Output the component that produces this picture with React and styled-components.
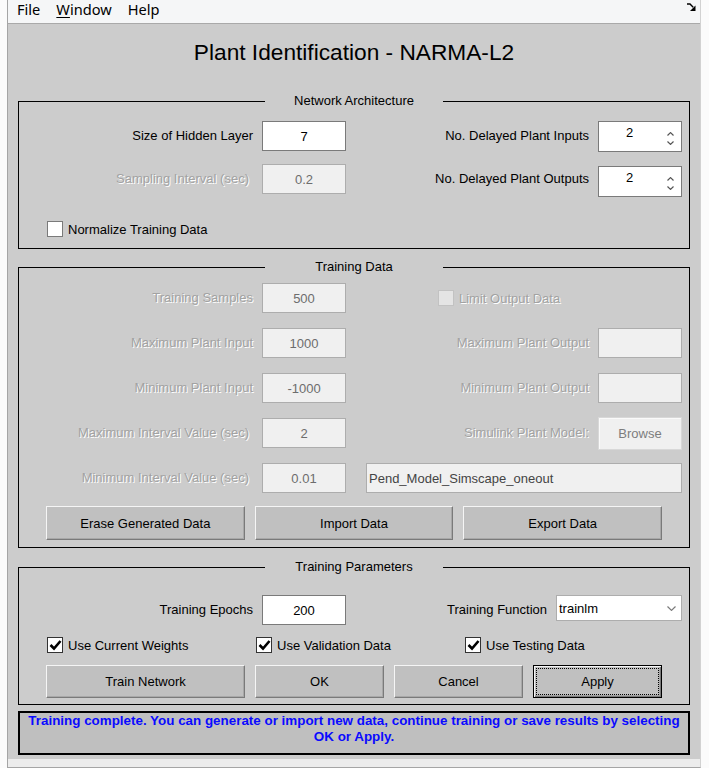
import React from "react";
import styled, { createGlobalStyle, css } from "styled-components";

const GlobalStyle = createGlobalStyle`
  html, body { margin: 0; padding: 0; background: #fbfbfb; }
  body { font-family: "Liberation Sans", Arial, sans-serif; }
  *, *::before, *::after { box-sizing: border-box; }
`;

const Frame = styled.div`
  width: 709px;
  height: 768px;
  padding: 0 8px 0 7px;
  background: #fbfbfb;
  overflow: hidden;
`;

const Window = styled.div`
  height: 768px;
  border-left: 1px solid #a5a5a5;
  border-right: 1px solid #d2d2d2;
  border-bottom: 1px solid #a5a5a5;
  background: #ececec;
  display: flex;
  flex-direction: column;
`;

const MenuBar = styled.div`
  flex: none;
  height: 24px;
  background: #f5f6f7;
  border-bottom: 1px solid #a9a9a9;
  display: flex;
  align-items: flex-start;
  gap: 16px;
  padding: 0 4px 0 9px;
  font-family: "Noto Sans", "Open Sans", sans-serif;
  font-size: 14.6px;
  color: #000;
`;

const MenuItem = styled.span`
  line-height: 19px;
  u { text-decoration: underline; text-underline-offset: 2px; }
`;

const Undock = styled.svg`
  margin-left: auto;
  margin-top: 3px;
`;

const Content = styled.div`
  flex: none;
  height: 735px;
  background: #cccccc;
  padding: 0 10px;
  display: flex;
  flex-direction: column;
`;

const Title = styled.h1`
  margin: 0 0 21px;
  height: 56px;
  line-height: 56px;
  text-align: center;
  font-size: 22.7px;
  font-weight: normal;
  color: #000;
`;

const Panel = styled.section`
  position: relative;
  flex: none;
  border: 1px solid #000;
  height: ${(p) => p.$h}px;
  margin-top: ${(p) => p.$mt || 0}px;
  padding-top: ${(p) => p.$pt}px;
`;

const PanelTitle = styled.div`
  position: absolute;
  top: -9px;
  left: 50%;
  transform: translateX(-50%);
  width: 178px;
  background: #cccccc;
  text-align: center;
  font-size: 13px;
  line-height: 16px;
  color: #000;
`;

const FieldGrid = styled.div`
  display: grid;
  grid-template-columns: ${(p) => p.$cols || "234px 84px 234px 84px"};
  grid-template-rows: ${(p) => p.$h || 30}px;
  column-gap: 9px;
  align-items: center;
  height: ${(p) => p.$h || 30}px;
  margin-top: ${(p) => p.$mt || 0}px;
`;

const Label = styled.span`
  justify-self: end;
  white-space: nowrap;
  font-size: 13px;
  padding-right: ${(p) => p.$pr || 0}px;
  padding-bottom: 2px;
  color: ${(p) => (p.$disabled ? "#a2a2a2" : "#000")};
  text-shadow: ${(p) => (p.$disabled ? "1px 1px 0 #ffffff" : "none")};
`;

const Edit = styled.div`
  width: 84px;
  height: 30px;
  display: flex;
  align-items: center;
  justify-content: center;
  font-size: 13px;
  background: ${(p) => (p.$disabled ? "#f0f0f0" : "#ffffff")};
  border: 1px solid ${(p) => (p.$disabled ? "#adadad" : "#7a7a7a")};
  color: ${(p) => (p.$disabled ? "#6d6d6d" : "#000")};
`;

const WideField = styled.div`
  grid-column: 3 / 5;
  margin-left: 11px;
  height: 30px;
  display: flex;
  align-items: center;
  padding-left: 2px;
  font-size: 13px;
  background: #f0f0f0;
  border: 1px solid #adadad;
  color: #444;
`;

const Spinner = styled.div`
  align-self: start;
  margin-top: ${(p) => p.$mt || 0}px;
  width: 84px;
  height: 31px;
  background: #fff;
  border: 1px solid #7a7a7a;
  display: flex;
`;

const SpinValue = styled.div`
  flex: 1;
  text-align: center;
  padding-top: 3px;
  font-size: 13px;
  line-height: 15px;
`;

const SpinArrows = styled.div`
  width: 21px;
  padding-top: 10px;
  display: flex;
  flex-direction: column;
  align-items: center;
  gap: 5px;
`;

const Select = styled.div`
  align-self: start;
  height: 26px;
  background: #fff;
  border: 1px solid #adadad;
  display: flex;
  align-items: center;
  padding-left: 2px;
  font-size: 13px;
  svg { margin-left: auto; margin-right: 5px; }
`;

const CheckGrid = styled.div`
  display: grid;
  grid-template-columns: repeat(3, 209px);
  padding-left: 28px;
  height: 16px;
  margin-top: ${(p) => p.$mt || 0}px;
`;

const Check = styled.label`
  display: inline-flex;
  align-items: center;
  gap: 5px;
  height: 16px;
  font-size: 13px;
  white-space: nowrap;
  justify-self: start;
  margin-left: ${(p) => p.$ml || 0}px;
  color: ${(p) => (p.$disabled ? "#a2a2a2" : "#000")};
  text-shadow: ${(p) => (p.$disabled ? "1px 1px 0 #ffffff" : "none")};
`;

const Box = styled.span`
  flex: none;
  width: 16px;
  height: 16px;
  display: flex;
  align-items: center;
  justify-content: center;
  background: ${(p) => (p.$disabled ? "#e4e4e4" : "#fff")};
  border: 1px solid ${(p) => (p.$disabled ? "#c2c2c2" : p.$checked ? "#333" : "#7a7a7a")};
`;

const ButtonGrid = styled.div`
  display: grid;
  grid-template-columns: ${(p) => p.$cols || "repeat(3, 1fr)"};
  column-gap: 10px;
  width: 616px;
  margin-left: 27px;
  height: ${(p) => p.$h}px;
  margin-top: ${(p) => p.$mt || 0}px;
`;

const Btn = styled.button`
  height: 100%;
  padding: 0;
  font-family: "Liberation Sans", Arial, sans-serif;
  font-size: 13px;
  color: #000;
  background: #c0c0c0;
  border: 1px solid;
  border-color: #f5f5f5 #7a7a7a #7a7a7a #f5f5f5;
  box-shadow: inset -1px -1px 0 #a8a8a8;
  ${(p) =>
    p.$default &&
    css`
      border-color: #000;
      box-shadow: inset 1px 1px 0 #f5f5f5, inset -1px -1px 0 #7a7a7a, inset -2px -2px 0 #a8a8a8;
      outline: 1px dotted #000;
      outline-offset: -4px;
    `}
`;

const DisabledBtn = styled.div`
  width: 84px;
  height: 33px;
  display: flex;
  align-items: center;
  justify-content: center;
  font-size: 13px;
  color: #7d7d7d;
  background: #f0f0f0;
  border: 1px solid #d8d8d8;
  box-shadow: inset 1px 1px 0 #fafafa;
`;

const Status = styled.div`
  flex: none;
  margin-top: 6px;
  height: 44px;
  border: 2px solid #000;
  background: #bfbfbf;
  color: #0a0aff;
  font-weight: bold;
  font-size: 13.4px;
  line-height: 16px;
  text-align: center;
`;

const Tick = () => (
  <svg width="13" height="12" viewBox="0 0 13 12">
    <path d="M1.5 6 L5 9.5 L11.5 2" stroke="#000" strokeWidth="2.6" fill="none" />
  </svg>
);

const CheckBox = ({ checked, disabled, children, ml }) => (
  <Check $disabled={disabled} $ml={ml}>
    <Box $checked={checked} $disabled={disabled}>{checked && <Tick />}</Box>
    {children}
  </Check>
);

const Chevron = ({ up }) => (
  <svg width="7" height="4" viewBox="0 0 7 4">
    <path d={up ? "M0.5 3.5 L3.5 0.6 L6.5 3.5" : "M0.5 0.5 L3.5 3.4 L6.5 0.5"} stroke="#555" strokeWidth="1.2" fill="none" />
  </svg>
);

const SpinBox = ({ value, mt }) => (
  <Spinner $mt={mt}>
    <SpinValue>{value}</SpinValue>
    <SpinArrows>
      <Chevron up />
      <Chevron />
    </SpinArrows>
  </Spinner>
);

export default function App() {
  return (
    <>
      <GlobalStyle />
      <Frame>
        <Window>
          <MenuBar>
            <MenuItem>File</MenuItem>
            <MenuItem><u>W</u>indow</MenuItem>
            <MenuItem>Help</MenuItem>
            <Undock width="9" height="8" viewBox="0 0 9 8">
              <path d="M0 1 H3 L6.2 4.2" stroke="#000" strokeWidth="1.4" fill="none" />
              <path d="M8.5 2.5 V8 H3 Z" fill="#000" />
            </Undock>
          </MenuBar>
          <Content>
            <Title>Plant Identification - NARMA-L2</Title>

            <Panel $h={148} $pt={19}>
              <PanelTitle>Network Architecture</PanelTitle>
              <FieldGrid>
                <Label>Size of Hidden Layer</Label>
                <Edit>7</Edit>
                <Label>No. Delayed Plant Inputs</Label>
                <SpinBox value="2" />
              </FieldGrid>
              <FieldGrid $mt={13}>
                <Label $disabled $pr={4}>Sampling Interval (sec)</Label>
                <Edit $disabled>0.2</Edit>
                <Label>No. Delayed Plant Outputs</Label>
                <SpinBox value="2" mt={2} />
              </FieldGrid>
              <CheckGrid $mt={27}>
                <CheckBox>Normalize Training Data</CheckBox>
              </CheckGrid>
            </Panel>

            <Panel $h={281} $mt={18} $pt={15}>
              <PanelTitle>Training Data</PanelTitle>
              <FieldGrid>
                <Label $disabled>Training Samples</Label>
                <Edit $disabled>500</Edit>
                <CheckBox disabled ml={83}>Limit Output Data</CheckBox>
                <span />
              </FieldGrid>
              <FieldGrid $mt={15}>
                <Label $disabled>Maximum Plant Input</Label>
                <Edit $disabled>1000</Edit>
                <Label $disabled>Maximum Plant Output</Label>
                <Edit $disabled />
              </FieldGrid>
              <FieldGrid $mt={15}>
                <Label $disabled>Minimum Plant Input</Label>
                <Edit $disabled>-1000</Edit>
                <Label $disabled>Minimum Plant Output</Label>
                <Edit $disabled />
              </FieldGrid>
              <FieldGrid $mt={15}>
                <Label $disabled $pr={4}>Maximum Interval Value (sec)</Label>
                <Edit $disabled>2</Edit>
                <Label $disabled>Simulink Plant Model:</Label>
                <DisabledBtn>Browse</DisabledBtn>
              </FieldGrid>
              <FieldGrid $mt={15}>
                <Label $disabled $pr={4}>Minimum Interval Value (sec)</Label>
                <Edit $disabled>0.01</Edit>
                <WideField>Pend_Model_Simscape_oneout</WideField>
              </FieldGrid>
              <ButtonGrid $h={34} $mt={13}>
                <Btn>Erase Generated Data</Btn>
                <Btn>Import Data</Btn>
                <Btn>Export Data</Btn>
              </ButtonGrid>
            </Panel>

            <Panel $h={138} $mt={19} $pt={27}>
              <PanelTitle>Training Parameters</PanelTitle>
              <FieldGrid $cols="234px 84px 192px 126px">
                <Label>Training Epochs</Label>
                <Edit>200</Edit>
                <Label>Training Function</Label>
                <Select>
                  trainlm
                  <svg width="9" height="5" viewBox="0 0 9 5">
                    <path d="M0.5 0.5 L4.5 4.4 L8.5 0.5" stroke="#7a7a7a" strokeWidth="1.2" fill="none" />
                  </svg>
                </Select>
              </FieldGrid>
              <CheckGrid $mt={12}>
                <CheckBox checked>Use Current Weights</CheckBox>
                <CheckBox checked>Use Validation Data</CheckBox>
                <CheckBox checked>Use Testing Data</CheckBox>
              </CheckGrid>
              <ButtonGrid $h={33} $mt={12} $cols="199px 1fr 1fr 1fr">
                <Btn>Train Network</Btn>
                <Btn>OK</Btn>
                <Btn>Cancel</Btn>
                <Btn $default>Apply</Btn>
              </ButtonGrid>
            </Panel>

            <Status>
              Training complete. You can generate or import new data, continue training or save results by selecting
              <br />
              OK or Apply.
            </Status>
          </Content>
        </Window>
      </Frame>
    </>
  );
}
